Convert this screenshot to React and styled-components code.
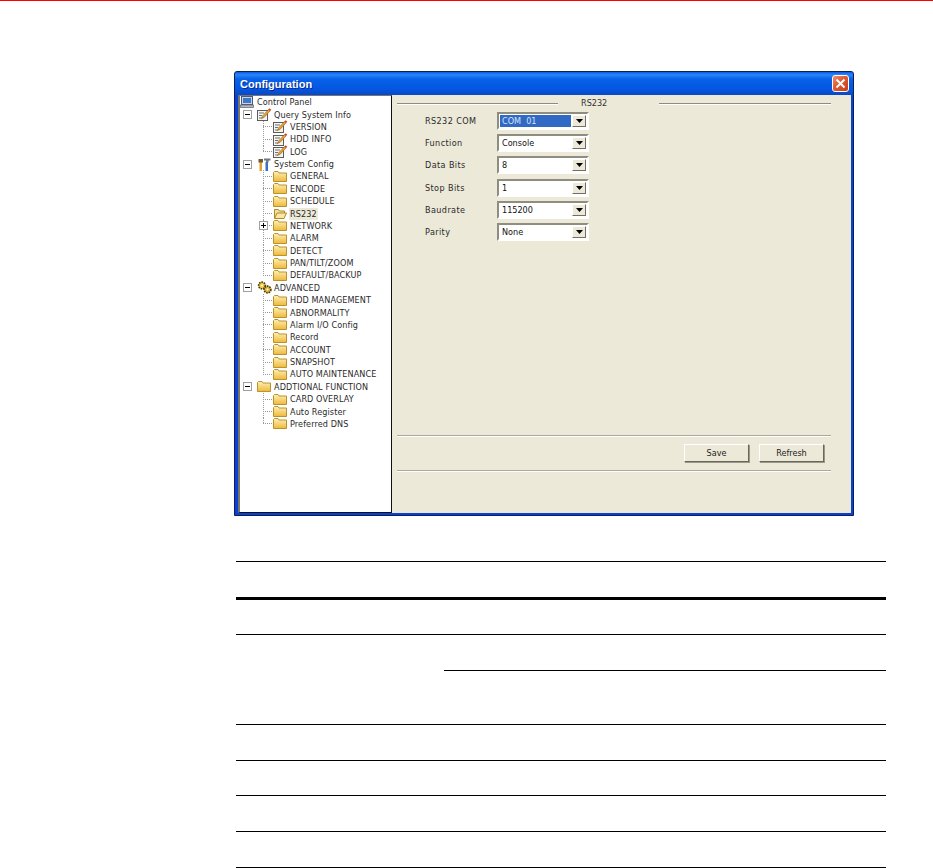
import React from 'react';
import styled, { createGlobalStyle } from 'styled-components';

const tree = [
  { id: 'root', label: 'Control Panel', icon: 'monitor', level: 0 },
  { id: 'query', label: 'Query System Info', icon: 'note', level: 1, toggle: '-' },
  { id: 'version', label: 'VERSION', icon: 'note', level: 2 },
  { id: 'hdd', label: 'HDD INFO', icon: 'note', level: 2 },
  { id: 'log', label: 'LOG', icon: 'note', level: 2, last: true },
  { id: 'system', label: 'System Config', icon: 'tools', level: 1, toggle: '-' },
  { id: 'general', label: 'GENERAL', icon: 'folder', level: 2 },
  { id: 'encode', label: 'ENCODE', icon: 'folder', level: 2 },
  { id: 'schedule', label: 'SCHEDULE', icon: 'folder', level: 2 },
  { id: 'rs232', label: 'RS232', icon: 'open', level: 2, selected: true },
  { id: 'network', label: 'NETWORK', icon: 'folder', level: 2, toggle: '+' },
  { id: 'alarm', label: 'ALARM', icon: 'folder', level: 2 },
  { id: 'detect', label: 'DETECT', icon: 'folder', level: 2 },
  { id: 'ptz', label: 'PAN/TILT/ZOOM', icon: 'folder', level: 2 },
  { id: 'default', label: 'DEFAULT/BACKUP', icon: 'folder', level: 2, last: true },
  { id: 'advanced', label: 'ADVANCED', icon: 'gears', level: 1, toggle: '-' },
  { id: 'hddm', label: 'HDD MANAGEMENT', icon: 'folder', level: 2 },
  { id: 'abnormal', label: 'ABNORMALITY', icon: 'folder', level: 2 },
  { id: 'alarmio', label: 'Alarm I/O Config', icon: 'folder', level: 2 },
  { id: 'record', label: 'Record', icon: 'folder', level: 2 },
  { id: 'account', label: 'ACCOUNT', icon: 'folder', level: 2 },
  { id: 'snapshot', label: 'SNAPSHOT', icon: 'folder', level: 2 },
  { id: 'maint', label: 'AUTO MAINTENANCE', icon: 'folder', level: 2, last: true },
  { id: 'extra', label: 'ADDTIONAL FUNCTION', icon: 'folder', level: 1, toggle: '-' },
  { id: 'card', label: 'CARD OVERLAY', icon: 'folder', level: 2 },
  { id: 'register', label: 'Auto Register', icon: 'folder', level: 2 },
  { id: 'dns', label: 'Preferred DNS', icon: 'folder', level: 2, last: true },
];

const fields = [
  { label: 'RS232 COM', value: 'COM  01', active: true },
  { label: 'Function', value: 'Console' },
  { label: 'Data Bits', value: '8' },
  { label: 'Stop Bits', value: '1' },
  { label: 'Baudrate', value: '115200' },
  { label: 'Parity', value: 'None' },
];

const Icon = ({ name }) => {
  if (name === 'monitor') {
    return (
      <svg width="14" height="12" viewBox="0 0 14 12">
        <rect x="1.5" y="0.5" width="11" height="8" fill="#c8d4e4" stroke="#4a5a78" />
        <rect x="3" y="2" width="8" height="5" fill="#3f78c8" />
        <rect x="0.5" y="9" width="13" height="2.5" fill="#b4b8c0" stroke="#5a6070" strokeWidth="0.7" />
      </svg>
    );
  }
  if (name === 'note') {
    return (
      <svg width="15" height="13" viewBox="0 0 15 13">
        <rect x="0.5" y="2.5" width="10" height="10" fill="#f4f4f0" stroke="#5c5c5c" />
        <path d="M2 5h5M2 7.5h3M2 10h3" stroke="#707070" strokeWidth="1" />
        <path d="M4.5 10.5l1-2.5 6-6.5 1.6 1.4-6 6.5z" fill="#e8a030" stroke="#7a5a20" strokeWidth="0.5" />
        <path d="M11.4 1.6l1.2-1.3 1.7 1.5-1.2 1.3z" fill="#e03a28" />
      </svg>
    );
  }
  if (name === 'tools') {
    return (
      <svg width="14" height="13" viewBox="0 0 14 13">
        <rect x="2.5" y="4" width="2.5" height="9" fill="#e8a030" />
        <rect x="1.5" y="1" width="4.5" height="3.5" fill="#6a5a3a" />
        <rect x="8.5" y="4" width="2.5" height="9" fill="#2f74c8" />
        <path d="M7 0.5h6.5v2h-2v2h-2.5v-2h-2z" fill="#70767e" />
      </svg>
    );
  }
  if (name === 'gears') {
    return (
      <svg width="15" height="13" viewBox="0 0 15 13">
        <circle cx="5" cy="4.5" r="3.4" fill="#eec840" stroke="#4a3e10" strokeWidth="1.6" strokeDasharray="1.6 0.9" />
        <circle cx="5" cy="4.5" r="1" fill="#fff" />
        <circle cx="10.5" cy="8.5" r="3.4" fill="#e0b030" stroke="#4a3e10" strokeWidth="1.6" strokeDasharray="1.6 0.9" />
        <circle cx="10.5" cy="8.5" r="1" fill="#fff" />
      </svg>
    );
  }
  if (name === 'open') {
    return (
      <svg width="14" height="11" viewBox="0 0 14 11">
        <path d="M1.5 10.5V1.5h4l1 1.5h5v2" fill="#f4e0a0" stroke="#b08a28" />
        <path d="M1.5 10.5l2.5-5.5h9.5l-2.5 5.5z" fill="#fbe6a4" stroke="#b08a28" />
      </svg>
    );
  }
  return (
    <svg width="14" height="11" viewBox="0 0 14 11">
      <defs>
        <linearGradient id="folderFill" x1="0" y1="0" x2="0" y2="1">
          <stop offset="0" stopColor="#fdf0b8" />
          <stop offset="1" stopColor="#f0b838" />
        </linearGradient>
      </defs>
      <path d="M0.5 10.5V1.5l1-1h3.5l1 1.5h7.5v8.5z" fill="url(#folderFill)" stroke="#b8922c" />
    </svg>
  );
};

const App = () => {
  return (
    <>
      <GlobalStyle />
      <Page>
        <TopRule />
        <Window>
          <TitleBar>
            <Title>Configuration</Title>
            <CloseButton>
              <svg width="11" height="11" viewBox="0 0 11 11">
                <path d="M1.5 1.5l8 8M9.5 1.5l-8 8" stroke="#fff" strokeWidth="2" />
              </svg>
            </CloseButton>
          </TitleBar>
          <WindowBody>
            <TreePanel>
              {tree.map((node) => (
                <TreeRow key={node.id}>
                  {node.level === 2 && <TreeGutter />}
                  {node.level === 2 && <Branch $last={node.last} />}
                  {node.toggle && (
                    <Toggle $child={node.level === 2}>
                      <ToggleMark $plus={node.toggle === '+'} />
                    </Toggle>
                  )}
                  <IconSlot $level={node.level}>
                    <Icon name={node.icon} />
                  </IconSlot>
                  <NodeLabel $selected={node.selected}>{node.label}</NodeLabel>
                </TreeRow>
              ))}
            </TreePanel>
            <Pane>
              <GroupHeading>
                <GroupLineShort />
                <GroupTitle>RS232</GroupTitle>
                <GroupLine />
              </GroupHeading>
              <Form>
                {fields.map((field) => (
                  <FieldRow key={field.label}>
                    <FieldLabel>{field.label}</FieldLabel>
                    <Combo>
                      <ComboValue $active={field.active}>{field.value}</ComboValue>
                      <ComboArrow>
                        <svg width="7" height="4" viewBox="0 0 7 4">
                          <path d="M0 0h7L3.5 4z" fill="#000" />
                        </svg>
                      </ComboArrow>
                    </Combo>
                  </FieldRow>
                ))}
              </Form>
              <ActionBar>
                <Button>Save</Button>
                <Button>Refresh</Button>
              </ActionBar>
            </Pane>
          </WindowBody>
        </Window>
        <SpecTable>
          <SpecRow $height={38} $heavy />
          <SpecRow $height={35} />
          <SplitRow>
            <SplitLeft />
            <SplitRight>
              <SplitCell $height={36} $line />
              <SplitCell $height={53} />
            </SplitRight>
          </SplitRow>
          <SpecRow $height={36} />
          <SpecRow $height={35} />
          <SpecRow $height={36} />
          <SpecRow $height={36} />
        </SpecTable>
      </Page>
    </>
  );
};

const GlobalStyle = createGlobalStyle`
  html, body {
    margin: 0;
    padding: 0;
    background: #fff;
  }

  body {
    font-family: "DejaVu Sans", Tahoma, sans-serif;
    font-stretch: condensed;
  }
`;

const Page = styled.div`
  width: 933px;
  height: 868px;
  overflow: hidden;
  background: #fff;
`;

const TopRule = styled.div`
  height: 1px;
  background: #ff0000;
`;

const Window = styled.div`
  width: 620px;
  height: 445px;
  margin: 70px 0 0 234px;
  display: flex;
  flex-direction: column;
  background: #0a3fd8;
  box-sizing: border-box;
  border: 1px solid #10204c;
  border-radius: 3px 3px 0 0;
`;

const TitleBar = styled.div`
  height: 23px;
  flex: none;
  display: flex;
  align-items: center;
  justify-content: space-between;
  padding: 0 4px 0 5px;
  background: linear-gradient(180deg, #0a5ae8 0%, #2a86f6 12%, #0862ea 30%, #0456e0 75%, #0a48c8 100%);
  border-radius: 2px 2px 0 0;
`;

const Title = styled.div`
  font-family: "Liberation Sans", Arial, sans-serif;
  font-size: 11px;
  font-weight: 700;
  color: #fff;
  text-shadow: 1px 1px 0 #0a2a90;
`;

const CloseButton = styled.div`
  width: 17px;
  height: 17px;
  box-sizing: border-box;
  display: flex;
  align-items: center;
  justify-content: center;
  border: 1px solid #fff;
  border-radius: 3px;
  background: linear-gradient(135deg, #f09070 0%, #e05a30 45%, #c83c14 100%);
`;

const WindowBody = styled.div`
  flex: 1;
  display: flex;
  min-height: 0;
  padding: 0 2px 2px 3px;
`;

const TreePanel = styled.div`
  width: 154px;
  flex: none;
  box-sizing: border-box;
  background: #fff;
  border-left: 2px solid #77756c;
  border-top: 1px solid #77756c;
  border-right: 1px solid #111;
  border-bottom: 1px solid #111;
`;

const TreeRow = styled.div`
  height: 12.38px;
  display: flex;
  align-items: center;
`;

const TreeGutter = styled.span`
  width: 19px;
  flex: none;
`;

const Branch = styled.span`
  width: 13px;
  height: 100%;
  flex: none;
  margin-right: -13px;
  background-image:
    repeating-linear-gradient(180deg, #999 0 1px, transparent 1px 2px),
    repeating-linear-gradient(90deg, #999 0 1px, transparent 1px 2px);
  background-size: 1px ${({ $last }) => ($last ? '50%' : '100%')}, 100% 1px;
  background-position: 4px 0, 4px 50%;
  background-repeat: no-repeat;
`;

const Toggle = styled.span`
  width: 9px;
  height: 9px;
  flex: none;
  box-sizing: border-box;
  display: flex;
  align-items: center;
  justify-content: center;
  margin: 0 ${({ $child }) => ($child ? '-9px' : '0')} 0 ${({ $child }) => ($child ? '0' : '3px')};
  background: #fff;
  border: 1px solid #a0a0a0;
`;

const ToggleMark = styled.span`
  position: relative;
  width: 5px;
  height: 1px;
  background: #000;

  &::after {
    content: '';
    display: ${({ $plus }) => ($plus ? 'block' : 'none')};
    position: absolute;
    left: 2px;
    top: -2px;
    width: 1px;
    height: 5px;
    background: #000;
  }
`;

const IconSlot = styled.span`
  width: 16px;
  flex: none;
  display: flex;
  align-items: center;
  justify-content: center;
  margin-left: ${({ $level }) => ($level === 2 ? '13px' : $level === 1 ? '4px' : '-1px')};
`;

const NodeLabel = styled.span`
  margin-left: 1px;
  padding: 1px 1px 0;
  font-size: 9px;
  line-height: 11px;
  letter-spacing: 0.1px;
  white-space: nowrap;
  color: #2a2a2a;
  background: ${({ $selected }) => ($selected ? '#ece9d8' : 'transparent')};
`;

const Pane = styled.div`
  flex: 1;
  min-width: 0;
  display: flex;
  flex-direction: column;
  padding: 2px 20px 0 5px;
  background: #ece9d8;
`;

const GroupHeading = styled.div`
  display: flex;
  align-items: center;
  height: 12px;
`;

const GroupLine = styled.div`
  flex: 1;
  height: 1px;
  background: #8d8c80;
  box-shadow: 0 1px 0 #fff;
`;

const GroupLineShort = styled(GroupLine)`
  flex: none;
  width: 161px;
`;

const GroupTitle = styled.div`
  width: 101px;
  box-sizing: border-box;
  padding-left: 23px;
  font-size: 9px;
  color: #333;
`;

const Form = styled.div`
  display: flex;
  flex-direction: column;
  gap: 3.4px;
  margin-top: 2px;
  padding-left: 28px;
`;

const FieldRow = styled.div`
  display: flex;
  align-items: center;
  height: 19px;
`;

const FieldLabel = styled.div`
  width: 72px;
  font-size: 9px;
  letter-spacing: 0.4px;
  color: #2a2a2a;
`;

const Combo = styled.div`
  width: 92px;
  height: 18px;
  box-sizing: border-box;
  display: flex;
  padding: 1px;
  background: #fff;
  border: 2px solid;
  border-color: #8f8d80 #fff #fff #8f8d80;
`;

const ComboValue = styled.div`
  flex: 1;
  display: flex;
  align-items: center;
  padding-left: 2px;
  font-size: 9px;
  white-space: pre;
  color: ${({ $active }) => ($active ? '#d6e2f6' : '#111')};
  background: ${({ $active }) => ($active ? '#316ac5' : '#fff')};
`;

const ComboArrow = styled.div`
  width: 14px;
  flex: none;
  display: flex;
  align-items: center;
  justify-content: center;
  margin-left: 1px;
  box-sizing: border-box;
  background: #ece9d8;
  border: 1px solid;
  border-color: #fff #716f64 #716f64 #fff;
`;

const ActionBar = styled.div`
  margin-top: auto;
  margin-bottom: 42px;
  height: 36px;
  box-sizing: border-box;
  display: flex;
  align-items: center;
  justify-content: flex-end;
  gap: 10px;
  padding-right: 7px;
  border-top: 1px solid #aaa99c;
  border-bottom: 1px solid #aaa99c;
  box-shadow: 0 1px 0 #fff, inset 0 1px 0 #fff;
`;

const Button = styled.div`
  width: 65px;
  height: 18px;
  box-sizing: border-box;
  display: flex;
  align-items: center;
  justify-content: center;
  font-size: 9px;
  color: #222;
  background: #ece9d8;
  border: 1px solid;
  border-color: #fff #6a685c #6a685c #fff;
  box-shadow: 1px 1px 0 #9a988a;
`;

const SpecTable = styled.div`
  width: 650px;
  margin: 45px 0 0 236px;
  border-top: 1px solid #000;
`;

const SpecRow = styled.div`
  height: ${({ $height }) => $height}px;
  box-sizing: border-box;
  border-bottom: ${({ $heavy }) => ($heavy ? '3px' : '1px')} solid #000;
`;

const SplitRow = styled.div`
  display: flex;
  border-bottom: 1px solid #000;
`;

const SplitLeft = styled.div`
  width: 208px;
  flex: none;
`;

const SplitRight = styled.div`
  flex: 1;
`;

const SplitCell = styled.div`
  height: ${({ $height }) => $height}px;
  box-sizing: border-box;
  border-bottom: ${({ $line }) => ($line ? '1px solid #000' : 'none')};
`;

export default App;
